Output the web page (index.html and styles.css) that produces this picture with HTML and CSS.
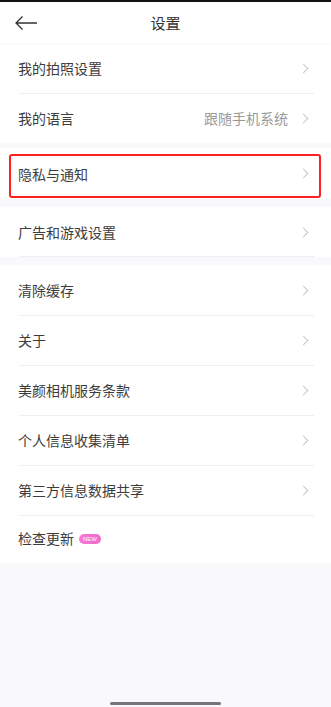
FILE: index.html
```html
<!DOCTYPE html>
<html lang="zh-CN">
<head>
    <meta charset="UTF-8">
    <meta name="viewport" content="width=device-width, initial-scale=1.0">
    <title>设置</title>
    <link rel="stylesheet" href="styles.css">
</head>
<body>
    <div class="status-strip"></div>

    <header class="top-bar">
        <span class="back">
            <svg width="24" height="16" viewBox="0 0 24 16">
                <path d="M23 8H2M8.5 1.5L2 8l6.5 6.5" fill="none" stroke="#333" stroke-width="1.3"/>
            </svg>
        </span>
        <h1>设置</h1>
    </header>

    <section class="group">
        <div class="row">
            <span class="label">我的拍照设置</span>
            <span class="chev"></span>
        </div>
        <div class="row">
            <span class="label">我的语言</span>
            <span class="value">跟随手机系统</span>
            <span class="chev"></span>
        </div>
    </section>

    <section class="group">
        <div class="row highlighted">
            <span class="label">隐私与通知</span>
            <span class="chev"></span>
        </div>
    </section>

    <section class="group group-wide">
        <div class="row last-line">
            <span class="label">广告和游戏设置</span>
            <span class="chev"></span>
        </div>
    </section>

    <section class="group group-wide">
        <div class="row">
            <span class="label">清除缓存</span>
            <span class="chev"></span>
        </div>
        <div class="row">
            <span class="label">关于</span>
            <span class="chev"></span>
        </div>
        <div class="row">
            <span class="label">美颜相机服务条款</span>
            <span class="chev"></span>
        </div>
        <div class="row">
            <span class="label">个人信息收集清单</span>
            <span class="chev"></span>
        </div>
        <div class="row">
            <span class="label">第三方信息数据共享</span>
            <span class="chev"></span>
        </div>
        <div class="row short">
            <span class="label">检查更新</span>
            <span class="badge">NEW</span>
        </div>
    </section>

    <div class="home-bar"></div>
</body>
</html>
```

FILE: styles.css
```css
* {
    box-sizing: border-box;
    margin: 0;
    padding: 0;
    font-family: "Noto Sans CJK SC", "Noto Sans", sans-serif;
}

body {
    background-color: #f9f9fc;
    width: 331px;
    height: 707px;
    overflow: hidden;
    position: relative;
}

.status-strip {
    height: 2px;
    background-color: #111;
}

.top-bar {
    height: 41px;
    background-color: #fff;
    display: flex;
    align-items: center;
    justify-content: center;
    position: relative;
    box-shadow: 0 1px 2px rgba(0,0,0,0.03);
}

.top-bar h1 {
    font-size: 15px;
    font-weight: normal;
    color: #333;
}

.back {
    position: absolute;
    left: 14px;
    top: 13px;
    display: flex;
}

.group {
    background-color: #fff;
    margin-top: 5px;
}

.top-bar + .group {
    margin-top: 0;
}

.group-wide {
    margin-top: 8px;
}

.row {
    height: 50px;
    display: flex;
    align-items: center;
    padding: 0 24px 0 18px;
    position: relative;
}

.row.short {
    height: 48px;
    padding-bottom: 2px;
}

.row + .row::before,
.last-line::after {
    content: "";
    position: absolute;
    left: 19px;
    right: 17px;
    top: 0;
    height: 1px;
    background-color: #efeff2;
}

.last-line::after {
    top: auto;
    bottom: 0;
}

.label {
    font-size: 14px;
    color: #3c3c3c;
    flex: 1;
}

.value {
    font-size: 14px;
    color: #9a9a9a;
    margin-right: 12px;
}

.chev {
    width: 7px;
    height: 7px;
    border-top: 1.2px solid #c8c8c8;
    border-right: 1.2px solid #c8c8c8;
    transform: rotate(45deg);
}

.highlighted {
    height: 51px;
}

.highlighted::after {
    content: "";
    position: absolute;
    left: 9px;
    right: 10px;
    top: 6px;
    bottom: 1px;
    border: 2px solid #ff1f1f;
    border-radius: 3px;
}

.badge {
    position: absolute;
    left: 79px;
    top: 19px;
    height: 10px;
    padding: 0 4px;
    border-radius: 5px;
    background: linear-gradient(90deg, #f778d6, #f06ac8);
    color: #fff;
    font-size: 6px;
    line-height: 10px;
    font-family: "Liberation Sans", sans-serif;
}

.home-bar {
    position: absolute;
    left: 110px;
    width: 111px;
    bottom: 2px;
    height: 3px;
    border-radius: 2px;
    background-color: #777;
}
```
